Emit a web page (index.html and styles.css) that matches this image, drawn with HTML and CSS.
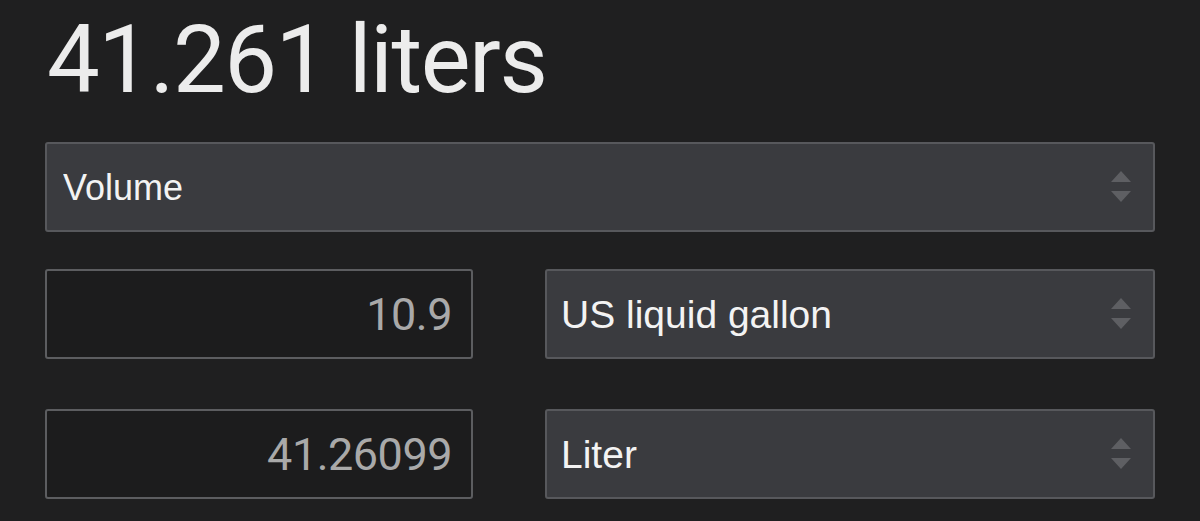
FILE: index.html
```html
<!DOCTYPE html>
<html>
<head>
<meta charset="utf-8">
<link rel="stylesheet" href="styles.css">
</head>
<body>
<main class="converter">
  <h1 class="result">41.261 liters</h1>
  <div class="select select-wide">
    <select class="select-field select-field-sm"><option>Volume</option></select>
    <svg class="arrows" viewBox="0 0 20 32" width="20" height="32"><path d="M10 0 L20 11 L0 11 Z M0 20 L20 20 L10 31 Z"/></svg>
  </div>
  <div class="row row-first">
    <input class="value" type="text" value="10.9">
    <div class="select">
      <select class="select-field"><option>US liquid gallon</option></select>
      <svg class="arrows" viewBox="0 0 20 32" width="20" height="32"><path d="M10 0 L20 11 L0 11 Z M0 20 L20 20 L10 31 Z"/></svg>
    </div>
  </div>
  <div class="row row-second">
    <input class="value" type="text" value="41.26099">
    <div class="select">
      <select class="select-field"><option>Liter</option></select>
      <svg class="arrows" viewBox="0 0 20 32" width="20" height="32"><path d="M10 0 L20 11 L0 11 Z M0 20 L20 20 L10 31 Z"/></svg>
    </div>
  </div>
</main>
</body>
</html>
```
FILE: styles.css
```css
html, body {
  margin: 0;
  padding: 0;
  background: #1f1f20;
  height: 100%;
  overflow: hidden;
}

.converter {
  width: 1110px;
  padding: 13px 0 0 45px;
  display: flex;
  flex-direction: column;
}

.result {
  margin: 0 0 35px 2px;
  font-family: Roboto, "Liberation Sans", sans-serif;
  font-weight: 400;
  font-size: 94px;
  line-height: 94px;
  letter-spacing: -1.5px;
  color: #ececec;
}

.row {
  display: grid;
  grid-template-columns: 428px 1fr;
  column-gap: 72px;
}

.row-first {
  margin-top: 37px;
}

.row-second {
  margin-top: 50px;
}

.select {
  position: relative;
  height: 90px;
}

.select-field {
  appearance: none;
  -webkit-appearance: none;
  width: 100%;
  height: 100%;
  margin: 0;
  box-sizing: border-box;
  border: 2px solid #57585c;
  border-radius: 3px;
  background: #3a3b3f;
  color: #f3f3f3;
  font-family: "Liberation Sans", Arial, sans-serif;
  font-size: 39px;
  padding: 0 60px 0 14px;
  outline: none;
}

.select-field-sm {
  font-size: 36px;
  padding-left: 16px;
}

.arrows {
  position: absolute;
  right: 24px;
  top: 29px;
  fill: #5e5f63;
  pointer-events: none;
}

.value {
  appearance: none;
  -webkit-appearance: none;
  height: 90px;
  width: 100%;
  margin: 0;
  box-sizing: border-box;
  border: 2px solid #5c5d60;
  border-radius: 3px;
  background: #1c1c1d;
  color: #a9a9a9;
  font-family: Roboto, "Liberation Sans", sans-serif;
  font-size: 45px;
  letter-spacing: -0.5px;
  text-align: right;
  padding: 0 19px 0 10px;
  outline: none;
}
```
